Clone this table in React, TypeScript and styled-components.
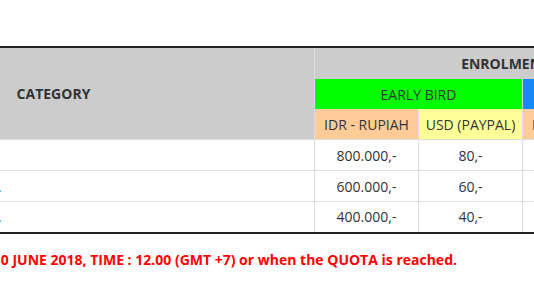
import React from "react";
import styled, { createGlobalStyle } from "styled-components";

const Global = createGlobalStyle`
  html, body { margin: 0; padding: 0; background: #fff; }
  body { font-family: "Open Sans", "Liberation Sans", sans-serif; color: #333; }
`;

const Frame = styled.div`
  width: 534px;
  height: 289px;
  overflow: hidden;
  padding-top: 46px;
  box-sizing: border-box;
`;

const PriceTable = styled.table`
  border-collapse: collapse;
  table-layout: fixed;
  width: 938px;
  margin-left: -208px;
  border-top: 2px solid #222;
  border-bottom: 2px solid #222;
  font-size: 14px;
`;

const HeadCell = styled.th<{ $bg: string; $h: number; $bold?: boolean }>`
  background: ${(p) => p.$bg};
  height: ${(p) => p.$h}px;
  padding: 0 6px;
  border-left: 1px solid #ddd;
  border-right: 1px solid #ddd;
  font-weight: ${(p) => (p.$bold ? 700 : 400)};
  font-size: 14px;
  color: #333;
  text-align: center;
  vertical-align: middle;
  white-space: nowrap;
  overflow: hidden;
`;

const Row = styled.tr`
  height: 31px;
`;

const Cell = styled.td`
  border: 1px solid #ddd;
  border-bottom: none;
  padding: 0 6px;
  text-align: center;
  vertical-align: middle;
  color: #333;
  white-space: nowrap;
  overflow: hidden;
`;

const CategoryCell = styled(Cell)`
  text-align: left;
  padding-left: 7px;
`;

const CategoryLink = styled.a`
  color: #2f8fdc;
  text-decoration: none;
`;

const Notice = styled.div`
  width: 457px;
  display: flex;
  justify-content: flex-end;
  margin-top: 16px;
`;

const NoticeText = styled.p`
  margin: 0;
  flex: none;
  white-space: nowrap;
  color: #ff0000;
  font-weight: 700;
  font-size: 14px;
  line-height: 20px;
`;

const groups = [
  { title: "EARLY BIRD", bg: "#00ff00" },
  { title: "REGULAR", bg: "#1589f5" },
];

const rows = [
  { cat: "Professional", v: ["800.000,-", "80,-", "1.000.000,-", "100,-"] },
  { cat: "Postgraduate Student (S2 / S3).", v: ["600.000,-", "60,-", "750.000,-", "75,-"] },
  { cat: "Student (Undergraduate / D-3).", v: ["400.000,-", "40,-", "500.000,-", "50,-"] },
];

export default function App() {
  return (
    <>
      <Global />
      <Frame>
        <PriceTable>
          <colgroup>
            <col style={{ width: 522 }} />
            <col style={{ width: 104 }} />
            <col style={{ width: 104 }} />
            <col style={{ width: 104 }} />
            <col style={{ width: 104 }} />
          </colgroup>
          <thead>
            <tr>
              <HeadCell $bg="#cccccc" $h={31} $bold rowSpan={3}>
                CATEGORY
              </HeadCell>
              <HeadCell $bg="#cccccc" $h={31} $bold colSpan={4}>
                ENROLMENT FEES
              </HeadCell>
            </tr>
            <tr>
              {groups.map((g) => (
                <HeadCell key={g.title} $bg={g.bg} $h={30} colSpan={2}>
                  {g.title}
                </HeadCell>
              ))}
            </tr>
            <tr>
              {groups.map((g) => (
                <React.Fragment key={g.title}>
                  <HeadCell $bg="#ffcc99" $h={30}>IDR - RUPIAH</HeadCell>
                  <HeadCell $bg="#ffff99" $h={30}>USD (PAYPAL)</HeadCell>
                </React.Fragment>
              ))}
            </tr>
          </thead>
          <tbody>
            {rows.map((r) => (
              <Row key={r.cat}>
                <CategoryCell>
                  <CategoryLink href="#">{r.cat}</CategoryLink>
                </CategoryCell>
                {r.v.map((v, i) => (
                  <Cell key={i}>{v}</Cell>
                ))}
              </Row>
            ))}
          </tbody>
        </PriceTable>
        <Notice>
          <NoticeText>
            Registration Deadline : 30 JUNE 2018, TIME : 12.00 (GMT +7) or when the QUOTA is reached.
          </NoticeText>
        </Notice>
      </Frame>
    </>
  );
}
